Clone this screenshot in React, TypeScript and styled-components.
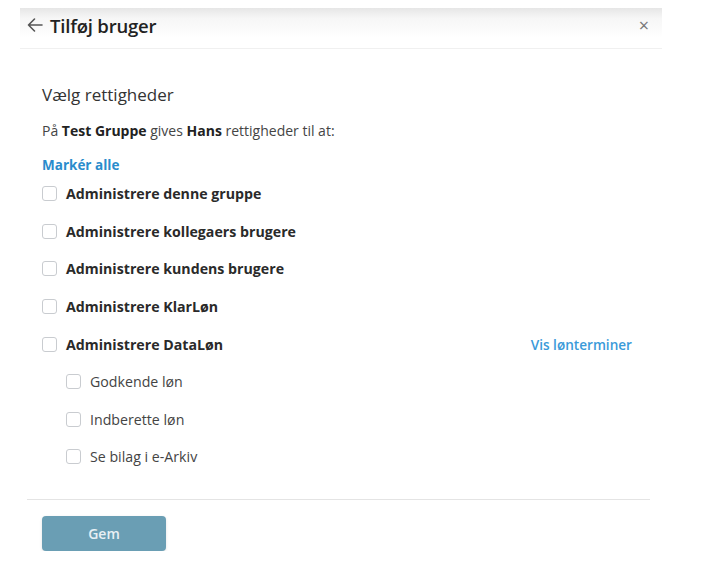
import React from "react";
import styled, { createGlobalStyle } from "styled-components";

const Global = createGlobalStyle`
  html, body { margin: 0; padding: 0; background: #fff; }
  body { font-family: "Open Sans", "DejaVu Sans", sans-serif; color: #333; }
  * { box-sizing: border-box; }
`;

const Modal = styled.div`
  width: 642px;
  margin: 8px 0 0 20px;
  display: flex;
  flex-direction: column;
`;

const Header = styled.div`
  height: 41px;
  display: flex;
  align-items: center;
  padding: 0 13px 6px 6px;
  background: linear-gradient(#e6e6e6 0px, #f6f6f6 10px, #ffffff 30px);
  border-bottom: 1px solid #f0f0f0;
`;

const BackButton = styled.span`
  display: flex;
  width: 18px;
  height: 18px;
  color: #555;
  margin-right: 6px;
`;

const Title = styled.h1`
  margin: 0;
  flex: 1;
  font-size: 18.5px;
  font-weight: 600;
  color: #222;
  letter-spacing: -0.2px;
`;

const Close = styled.span`
  font-size: 18px;
  color: #777;
  line-height: 1;
`;

const Body = styled.div`
  padding: 34px 30px 0 22px;
  display: flex;
  flex-direction: column;
`;

const Heading = styled.h2`
  margin: 0 0 15px;
  font-size: 17px;
  font-weight: 400;
  color: #333;
`;

const Intro = styled.p`
  margin: 0 0 16px;
  font-size: 14px;
  color: #444;
  b { font-weight: 700; color: #222; }
`;

const SelectAll = styled.a`
  font-size: 13.5px;
  font-weight: 700;
  color: #2a8ccc;
  margin-bottom: 1px;
`;

const Row = styled.div<{ $sub?: boolean }>`
  height: 37.6px;
  display: flex;
  align-items: center;
  padding-left: ${(p) => (p.$sub ? 24 : 0)}px;
`;

const Box = styled.span`
  width: 15px;
  height: 15px;
  border: 1px solid #c9ccd0;
  border-radius: 3px;
  background: #fff;
  margin-right: 9px;
  flex-shrink: 0;
`;

const Label = styled.span<{ $sub?: boolean }>`
  flex: 1;
  font-size: 14.2px;
  font-weight: ${(p) => (p.$sub ? 400 : 700)};
  color: ${(p) => (p.$sub ? "#444" : "#2a2a2a")};
`;

const Link = styled.a`
  font-size: 13.6px;
  font-weight: 600;
  color: #3a9ad9;
`;

const Footer = styled.div`
  margin: 23px 12px 0 7px;
  border-top: 1px solid #e4e4e4;
  padding: 16px 0 0 15px;
`;

const SaveButton = styled.button`
  width: 124px;
  height: 35px;
  border: none;
  border-radius: 4px;
  background: #6a9eb4;
  color: #e8f0f4;
  font-family: "Open Sans", sans-serif;
  font-size: 14px;
  font-weight: 600;
  box-shadow: 0 1px 3px rgba(0,0,0,0.12);
`;

const main = [
  "Administrere denne gruppe",
  "Administrere kollegaers brugere",
  "Administrere kundens brugere",
  "Administrere KlarLøn",
];
const sub = ["Godkende løn", "Indberette løn", "Se bilag i e-Arkiv"];

export default function App() {
  return (
    <>
      <Global />
      <Modal>
        <Header>
          <BackButton>
            <svg width="18" height="18" viewBox="0 0 18 18" fill="none" stroke="currentColor" strokeWidth="1.6" strokeLinecap="round" strokeLinejoin="round">
              <path d="M16 9H2.5M8.5 3L2.5 9l6 6" />
            </svg>
          </BackButton>
          <Title>Tilføj bruger</Title>
          <Close>×</Close>
        </Header>
        <Body>
          <Heading>Vælg rettigheder</Heading>
          <Intro>
            På <b>Test Gruppe</b> gives <b>Hans</b> rettigheder til at:
          </Intro>
          <SelectAll>Markér alle</SelectAll>
          {main.map((m) => (
            <Row key={m}>
              <Box />
              <Label>{m}</Label>
            </Row>
          ))}
          <Row>
            <Box />
            <Label>Administrere DataLøn</Label>
            <Link>Vis lønterminer</Link>
          </Row>
          {sub.map((s) => (
            <Row key={s} $sub>
              <Box />
              <Label $sub>{s}</Label>
            </Row>
          ))}
        </Body>
        <Footer>
          <SaveButton>Gem</SaveButton>
        </Footer>
      </Modal>
    </>
  );
}
